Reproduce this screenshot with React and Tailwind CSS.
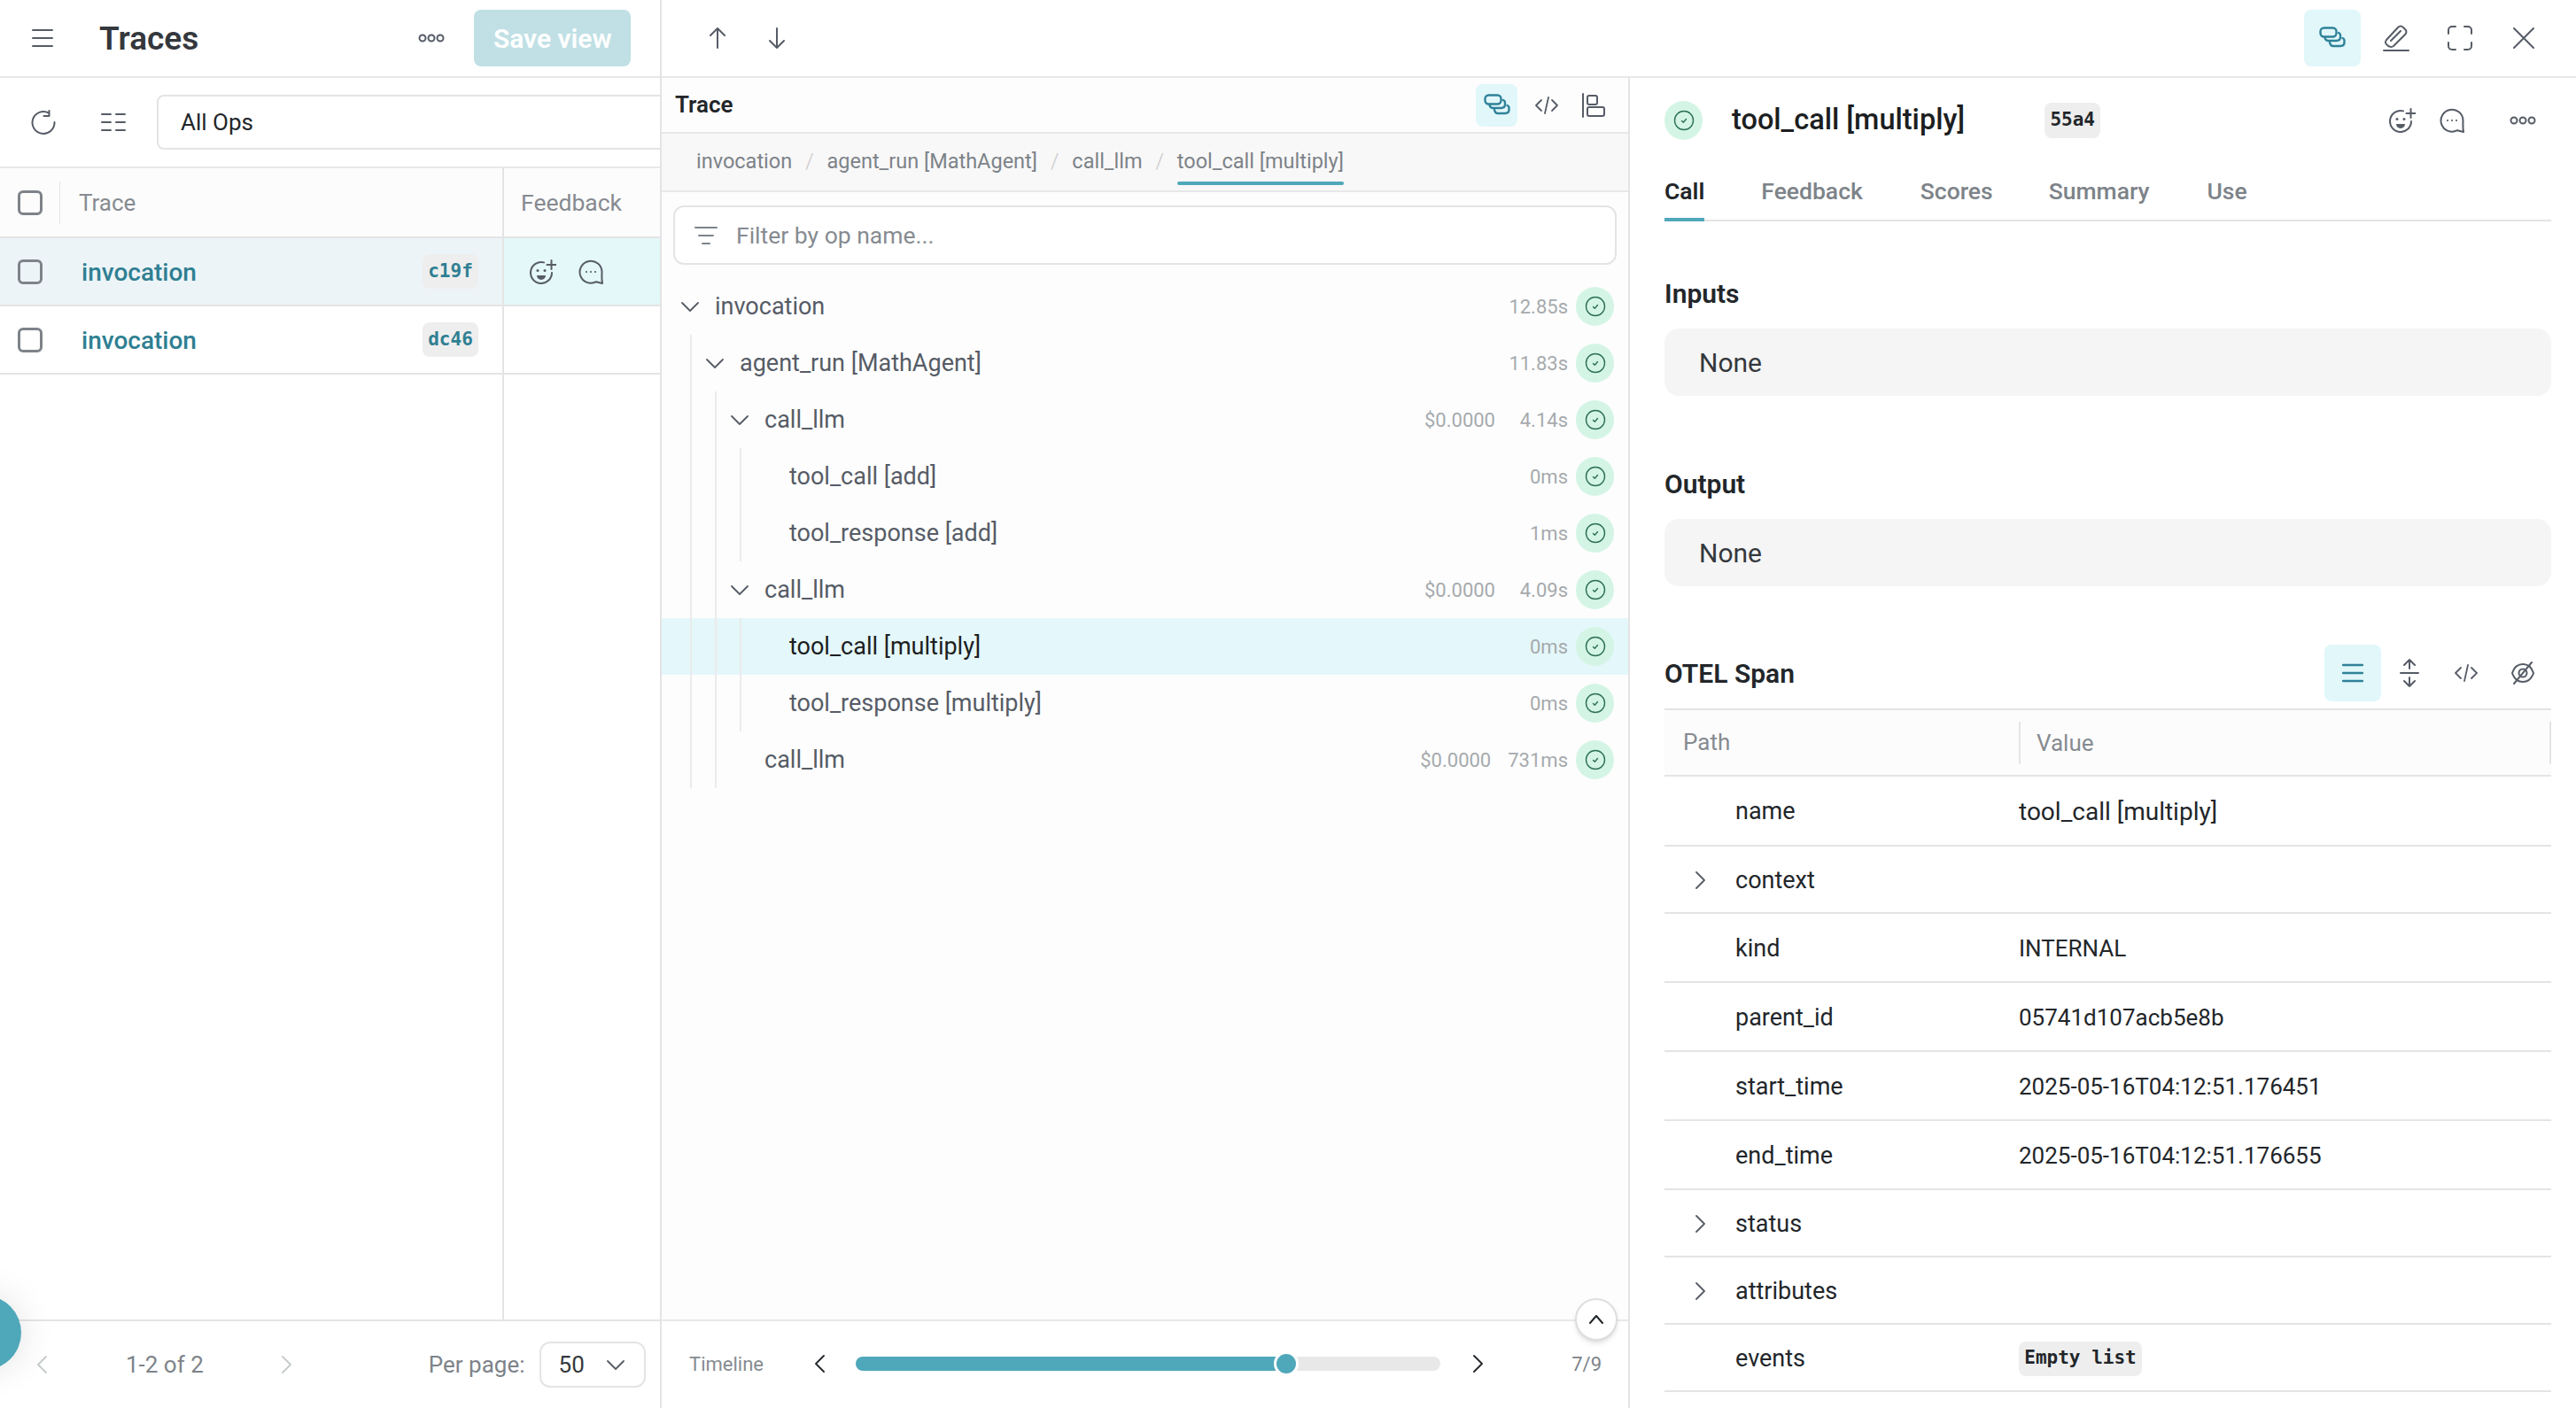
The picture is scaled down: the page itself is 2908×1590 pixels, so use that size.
import React from 'react';

const Ico = ({ w, h = w, sw = 2, className = '', children }) => (
  <svg
    width={w}
    height={h}
    viewBox={`0 0 ${w} ${h}`}
    fill="none"
    stroke="currentColor"
    strokeWidth={sw}
    strokeLinecap="round"
    strokeLinejoin="round"
    className={`shrink-0 ${className}`}
  >
    {children}
  </svg>
);

const ChevronDown = ({ className }) => (
  <Ico w={20} h={11} sw={1.800} className={className}><path d="M1 1l9 9 9-9" /></Ico>
);
const ChevronRight = ({ className }) => (
  <Ico w={11} h={20} sw={1.800} className={className}><path d="M1 1l9 9-9 9" /></Ico>
);
const ChevronLeft = ({ className }) => (
  <Ico w={11} h={20} sw={1.800} className={className}><path d="M10 1L1 10l9 9" /></Ico>
);

const Layers = () => (
  <Ico w={30} h={26} sw={2.400} className="text-[#2f8299]">
    <rect x="1.500" y="1.500" width="18" height="10" rx="4" />
    <path d="M6.500 12.500c.5 2.500 1.800 3.500 4 3.500h9c3 0 4.500-1.500 4.500-4v-2c0-1.500-.7-2.500-2-3" />
    <path d="M12 18c.5 3 1.800 4 4 4h8c3 0 4.500-1.500 4.500-4v-2c0-1.500-.7-2.500-2-3" />
  </Ico>
);
const Code = () => (
  <Ico w={28} h={22} sw={1.800} className="text-[#565c66]">
    <path d="M8 5l-6 6 6 6M20 5l6 6-6 6M16 2l-4 18" />
  </Ico>
);
const Dots = ({ className = '' }) => (
  <Ico w={30} h={10} className={`text-[#565c66] ${className}`}>
    <circle cx="5" cy="5" r="3.500" />
    <circle cx="15" cy="5" r="3.500" />
    <circle cx="25" cy="5" r="3.500" />
  </Ico>
);
const Reaction = () => (
  <Ico w={30} h={28} className="text-[#565c66]">
    <path d="M16 3.400A12 12 0 1 0 25 15" />
    <path d="M24.500 1v10M19.500 6h10" />
    <circle cx="9" cy="12.500" r="1.500" fill="currentColor" stroke="none" />
    <circle cx="17" cy="12.500" r="1.500" fill="currentColor" stroke="none" />
    <path d="M8 18h10a5 5 0 0 1-10 0z" fill="currentColor" stroke="none" />
  </Ico>
);
const Comment = () => (
  <Ico w={28} h={28} className="text-[#565c66]">
    <path d="M27 27l-7-1.800A12.500 12.500 0 1 1 26.500 14c0 4.500-.5 8 .5 13z" />
    <circle cx="9" cy="14" r="1.100" fill="currentColor" stroke="none" />
    <circle cx="14" cy="14" r="1.100" fill="currentColor" stroke="none" />
    <circle cx="19" cy="14" r="1.100" fill="currentColor" stroke="none" />
  </Ico>
);
const Status = () => (
  <div className="flex h-[44px] w-[43px] shrink-0 items-center justify-center rounded-full bg-[#d4f5e6] text-[#2e6f58]">
    <Ico w={24} sw={1.400}>
      <circle cx="12" cy="12" r="10.500" />
      <path d="M9.500 12.500l1.800 1.800 3.200-3.800" />
    </Ico>
  </div>
);

const tree = [
  { name: 'invocation', depth: 0, guides: 0, open: true, time: '12.85s' },
  { name: 'agent_run [MathAgent]', depth: 1, guides: 1, open: true, time: '11.83s' },
  { name: 'call_llm', depth: 2, guides: 2, open: true, cost: '$0.0000', time: '4.14s' },
  { name: 'tool_call [add]', depth: 3, guides: 3, time: '0ms' },
  { name: 'tool_response [add]', depth: 3, guides: 3, time: '1ms' },
  { name: 'call_llm', depth: 2, guides: 2, open: true, cost: '$0.0000', time: '4.09s' },
  { name: 'tool_call [multiply]', depth: 3, guides: 3, time: '0ms', active: true },
  { name: 'tool_response [multiply]', depth: 3, guides: 3, time: '0ms' },
  { name: 'call_llm', depth: 2, guides: 2, cost: '$0.0000', time: '731ms' },
];

const spanRows = [
  { path: 'name', value: 'tool_call [multiply]', valueClass: 'text-[28px]', h: 'h-[79px]' },
  { path: 'context', more: true, h: 'h-[76px]' },
  { path: 'kind', value: 'INTERNAL', h: 'h-[78px]' },
  { path: 'parent_id', value: '05741d107acb5e8b', h: 'h-[78px]' },
  { path: 'start_time', value: '2025-05-16T04:12:51.176451', h: 'h-[78px]' },
  { path: 'end_time', value: '2025-05-16T04:12:51.176655', h: 'h-[78px]' },
  { path: 'status', more: true, h: 'h-[76px]' },
  { path: 'attributes', more: true, h: 'h-[76px]' },
  { path: 'events', pill: 'Empty list', h: 'h-[76px]' },
];

const monoPill = "[font-family:'DejaVu_Sans_Mono',monospace] text-[21px] font-bold";

const LeftPanel = () => (
  <div className="flex w-[747px] shrink-0 flex-col border-r-2 border-[#e4e4e4]">
    <div className="flex h-[88px] shrink-0 items-center border-b-2 border-[#e8e8e8]">
      <Ico w={24} h={22} className="ml-[36px] text-[#565c66]">
        <path d="M1 2h22M1 11h22M1 20h22" />
      </Ico>
      <div className="ml-[52px] pt-[2px] text-[37px] font-semibold text-[#34383d]">Traces</div>
      <Dots className="ml-[248px]" />
      <div className="ml-[33px] flex h-[64px] w-[177px] items-center justify-center rounded-lg bg-[#c0e0e5] text-[30px] font-semibold text-white">
        Save view
      </div>
    </div>

    <div className="flex h-[102px] shrink-0 items-center overflow-hidden border-b-2 border-[#e8e8e8]">
      <Ico w={28} sw={2} className="ml-[35px] text-[#565c66]">
        <path d="M20 3.500A12.500 12.500 0 1 0 26.500 14" />
        <path d="M20.500 1v6h-6" />
      </Ico>
      <Ico w={28} h={22} className="ml-[51px] text-[#565c66]">
        <path d="M1 2h10M17 2h10M1 11h10M17 11h10M1 20h10M17 20h10" />
      </Ico>
      <div className="ml-[35px] flex h-[62px] w-[640px] shrink-0 items-center rounded-lg border-2 border-[#e4e4e4] pl-[25px] pt-[1px] text-[26px] text-[#22262a]">
        All Ops
      </div>
    </div>

    <div className="flex flex-1">
      <div className="flex w-[567px] shrink-0 flex-col">
        <div className="flex h-[79px] items-center border-b-2 border-[#e4e4e4] bg-[#fcfcfc]">
          <div className="ml-[20px] h-[28px] w-[28px] rounded-md border-[3px] border-[#7d8389]" />
          <div className="ml-[19px] h-[48px] border-l border-[#e4e4e4]" />
          <div className="ml-[21px] pt-[2px] text-[26px] text-[#868b91]">Trace</div>
        </div>
        {[
          { id: 'c19f', bg: 'bg-[#edf4f7]' },
          { id: 'dc46', bg: 'bg-white' },
        ].map((row) => (
          <div key={row.id} className={`flex h-[77px] items-center border-b-2 border-[#e4e4e4] ${row.bg}`}>
            <div className="ml-[20px] h-[28px] w-[28px] rounded-md border-[3px] border-[#7d8389]" />
            <div className="ml-[44px] pt-[3px] text-[28px] font-medium text-[#2f7f92]">invocation</div>
            <div className={`ml-auto mr-[27px] flex h-[39px] w-[63px] items-center justify-center rounded-lg bg-[#eeeeee] text-[#2f7f92] ${monoPill}`}>
              {row.id}
            </div>
          </div>
        ))}
      </div>
      <div className="flex flex-1 flex-col border-l-2 border-[#e4e4e4]">
        <div className="flex h-[79px] items-center border-b-2 border-[#e4e4e4] bg-[#fcfcfc] pl-[19px] text-[26.500px] text-[#868b91]">
          Feedback
        </div>
        <div className="flex h-[77px] items-center gap-[25px] border-b-2 border-[#e4e4e4] bg-[#e4f7f9] pl-[29px]">
          <Reaction />
          <Comment />
        </div>
        <div className="h-[77px] border-b-2 border-[#e4e4e4]" />
      </div>
    </div>

    <div className="flex h-[100px] shrink-0 items-center border-t-2 border-[#e4e4e4] text-[26px] text-[#7d8389]">
      <ChevronLeft className="ml-[42px] text-[#c6cacc]" />
      <div className="ml-[89px]">1-2 of 2</div>
      <ChevronRight className="ml-[88px] text-[#c6cacc]" />
      <div className="ml-[155px]">Per page:</div>
      <div className="ml-[16px] flex h-[52px] w-[120px] items-center rounded-xl border-2 border-[#e4e4e4] pl-[20px] text-[#34383d]">
        50
        <ChevronDown className="ml-[25px] text-[#565c66]" />
      </div>
    </div>
  </div>
);

const TreeRow = ({ row }) => (
  <div className={`flex h-[64px] items-stretch pl-[32px] pr-[16px] ${row.active ? 'bg-[#e4f7fa]' : ''}`}>
    {tree.slice(0, row.guides).map((_, i) => (
      <div key={i} className="w-[28px] shrink-0 border-l-2 border-[#ebebeb]" />
    ))}
    <div className="-ml-[12px] mr-[16px] flex w-[24px] shrink-0 items-center justify-center text-[#565c66]">
      {row.open && <ChevronDown />}
    </div>
    <div className={`self-center text-[27px] ${row.active ? 'text-[#1c1e21]' : 'text-[#565c66]'}`}>{row.name}</div>
    <div className="ml-auto self-center text-[22px] text-[#a6aaad]">{row.cost}</div>
    <div className="ml-[19px] min-w-[63px] self-center text-right text-[22px] text-[#a6aaad]">{row.time}</div>
    <div className="ml-[9px] self-center"><Status /></div>
  </div>
);

const MiddlePanel = () => (
  <div className="relative flex w-[1093px] shrink-0 flex-col border-r-2 border-[#e4e4e4] bg-[#fdfdfd]">
    <div className="flex h-[63px] shrink-0 items-center border-b-2 border-[#e8e8e8] pl-[15px] pr-[26px]">
      <div className="text-[26px] font-semibold text-[#22262a]">Trace</div>
      <div className="ml-auto flex h-[48px] w-[47px] items-center justify-center rounded-lg bg-[#e1f7fa]"><Layers /></div>
      <div className="ml-[9px] flex w-[47px] justify-center"><Code /></div>
      <Ico w={26} h={28} className="ml-[17px] text-[#565c66]">
        <path d="M1 1v26" />
        <rect x="6" y="3" width="11" height="10" rx="2" />
        <rect x="6" y="16" width="19" height="10" rx="2" />
      </Ico>
    </div>

    <div className="flex h-[66px] shrink-0 border-b-2 border-[#e8e8e8] bg-[#f8f8f8] pl-[39px] text-[23.500px] text-[#7d8389]">
      <div className="flex h-[64px] items-center">invocation</div>
      <div className="mx-[15px] flex h-[64px] items-center font-light text-[#c8c8c8]">/</div>
      <div className="flex h-[64px] items-center">agent_run [MathAgent]</div>
      <div className="mx-[15px] flex h-[64px] items-center font-light text-[#c8c8c8]">/</div>
      <div className="flex h-[64px] items-center">call_llm</div>
      <div className="mx-[15px] flex h-[64px] items-center font-light text-[#c8c8c8]">/</div>
      <div className="relative flex h-[64px] items-center">
        tool_call [multiply]
        <div className="absolute bottom-[6px] left-0 h-[4px] w-full rounded-full bg-[#4fa8ba]" />
      </div>
    </div>

    <div className="mx-[13px] mt-[15px] flex h-[67px] shrink-0 items-center rounded-xl border-2 border-[#e4e4e4] bg-white pl-[22px] text-[26.500px] text-[#868b91]">
      <Ico w={26} h={22} className="text-[#7d8389]">
        <path d="M1 2h24M5 11h16M9 20h8" />
      </Ico>
      <div className="ml-[21px]">Filter by op name...</div>
    </div>

    <div className="mt-[15px] flex-1">
      {tree.map((row, i) => (
        <TreeRow key={i} row={row} />
      ))}
    </div>

    <div className="flex h-[100px] shrink-0 items-center border-t-2 border-[#e8e8e8] bg-white pb-[2px] text-[22px] text-[#868b91]">
      <div className="ml-[31px] w-[142px]">Timeline</div>
      <ChevronLeft className="text-[#22262a]" />
      <div className="ml-[35px] flex h-[16px] w-[660px] items-center rounded-full bg-[#e8e8e8]">
        <div className="h-[16px] w-[474px] rounded-l-full bg-[#4fa8ba]" />
        <div className="-ml-[2px] h-[28px] w-[28px] rounded-full border-[3px] border-white bg-[#4fa8ba]" />
      </div>
      <ChevronRight className="ml-[37px] text-[#22262a]" />
      <div className="ml-auto mr-[30px] text-[#7d8389]">7/9</div>
    </div>

    <div className="absolute bottom-[76px] right-[12px] flex h-[48px] w-[48px] items-center justify-center rounded-full border-2 border-[#dedede] bg-white text-[#22262a] shadow-md">
      <Ico w={16} h={10}><path d="M1 9l7-8 7 8" /></Ico>
    </div>
  </div>
);

const DetailPanel = () => (
  <div className="min-w-0 flex-1 pl-[39px] pr-[28px] text-[#22262a]">
    <div className="flex h-[70px] items-end">
      <Status />
      <div className="ml-[33px] self-center pt-[25px] text-[32.500px] font-medium text-[#1c1e21]">tool_call [multiply]</div>
      <div className={`ml-[90px] mb-[2px] flex h-[40px] w-[63px] items-center justify-center rounded-lg bg-[#eeeeee] text-[#22262a] ${monoPill}`}>55a4</div>
      <div className="ml-auto flex items-center pb-[8px] pr-[17px]">
        <Reaction />
        <div className="ml-[27px]"><Comment /></div>
        <Dots className="ml-[51px]" />
      </div>
    </div>

    <div className="mt-[32px] flex h-[60px] border-b-2 border-[#e4e4e4] text-[26.500px] font-medium text-[#7d8389]">
      <div className="h-[60px] border-b-[4px] border-[#4fa8ba] pt-[6px] font-semibold text-[#22262a]">Call</div>
      <div className="ml-[64px] pt-[6px]">Feedback</div>
      <div className="ml-[65px] pt-[6px]">Scores</div>
      <div className="ml-[63px] pt-[6px]">Summary</div>
      <div className="ml-[65px] pt-[6px]">Use</div>
    </div>

    <div className="mt-[64px] text-[30px] font-semibold leading-[36px]">Inputs</div>
    <div className="mt-[21px] flex h-[76px] items-center rounded-2xl bg-[#f5f5f5] pl-[39px] text-[30px] text-[#34383d]">None</div>
    <div className="mt-[82px] text-[30px] font-semibold leading-[36px]">Output</div>
    <div className="mt-[21px] flex h-[76px] items-center rounded-2xl bg-[#f5f5f5] pl-[39px] text-[30px] text-[#34383d]">None</div>

    <div className="mt-[66px] flex h-[64px] items-center">
      <div className="text-[30px] font-semibold">OTEL Span</div>
      <div className="ml-auto flex items-center">
        <div className="flex h-[64px] w-[64px] items-center justify-center rounded-lg bg-[#e1f7fa] text-[#2f8299]">
          <Ico w={24} h={24} sw={2.400}><path d="M1 3h22M1 12h22M1 21h22" /></Ico>
        </div>
        <div className="flex w-[64px] justify-center text-[#565c66]">
          <Ico w={22} h={34}>
            <path d="M1 17h20M11 2v10M5 8l6-6 6 6M11 22v10M5 26l6 6 6-6" />
          </Ico>
        </div>
        <div className="flex w-[64px] justify-center"><Code /></div>
        <div className="flex w-[64px] justify-center text-[#565c66]">
          <Ico w={30} h={28}>
            <path d="M3 14c2-6 6-10 12-10s10 4 12 10c-2 6-6 10-12 10S5 20 3 14z" />
            <circle cx="15" cy="14" r="4.500" />
            <path d="M25 2L5 26" />
          </Ico>
        </div>
      </div>
    </div>

    <div className="mt-[8px] flex h-[77px] items-center border-y-2 border-[#e4e4e4] bg-[#fcfcfc] text-[26px] text-[#868b91]">
      <div className="w-[400px] pl-[21px]">Path</div>
      <div className="h-[48px] border-l-2 border-[#e4e4e4] pl-[18px] leading-[48px]">Value</div>
      <div className="ml-auto h-[48px] border-l-2 border-[#e4e4e4]" />
    </div>

    {spanRows.map((row) => (
      <div key={row.path} className={`flex items-center border-b-2 border-[#e4e4e4] pt-[2px] text-[26px] ${row.h}`}>
        <div className="flex w-[46px] shrink-0 justify-end text-[#565c66]">{row.more && <ChevronRight />}</div>
        <div className="ml-[34px] w-[320px] shrink-0 text-[27px]">{row.path}</div>
        {row.value && <div className={row.valueClass}>{row.value}</div>}
        {row.pill && (
          <div className={`flex h-[39px] w-[139px] items-center justify-center rounded-lg bg-[#eeeeee] ${monoPill}`}>{row.pill}</div>
        )}
      </div>
    ))}
  </div>
);

export default function App() {
  return (
    <div className="relative flex h-[1590px] w-[2908px] overflow-hidden bg-white [font-family:Roboto,sans-serif]">
      <LeftPanel />
      <div className="flex min-w-0 flex-1 flex-col">
        <div className="flex h-[88px] shrink-0 items-center border-b-2 border-[#e8e8e8] text-[#565c66]">
          <Ico w={20} h={24} className="ml-[53px]"><path d="M10 23V1M2 9l8-8 8 8" /></Ico>
          <Ico w={20} h={24} className="ml-[47px]"><path d="M10 1v22M2 15l8 8 8-8" /></Ico>
          <div className="ml-auto flex h-[64px] w-[64px] items-center justify-center rounded-lg bg-[#e1f7fa]"><Layers /></div>
          <Ico w={32} h={32} className="ml-[24px]">
            <path d="M2 30h28M6 24c-2.500-1.500-2.500-4-1-6L18 4c2-2 4-2 6 0l2 2c2 2 2 4 0 6L13 25c-2 1.500-5 1-7-1zM10 19L21 8" />
          </Ico>
          <Ico w={28} h={28} className="ml-[42px]">
            <path d="M9 1H5a4 4 0 0 0-4 4v4M19 1h4a4 4 0 0 1 4 4v4M9 27H5a4 4 0 0 1-4-4v-4M19 27h4a4 4 0 0 0 4-4v-4" />
          </Ico>
          <Ico w={24} h={24} className="ml-[46px] mr-[47px]"><path d="M1 1l22 22M23 1L1 23" /></Ico>
        </div>
        <div className="flex min-h-0 flex-1">
          <MiddlePanel />
          <DetailPanel />
        </div>
      </div>
      <div className="absolute left-[-60px] top-[1463px] h-[84px] w-[84px] rounded-full bg-[#4fa8ba] shadow-[0_0_40px_rgba(0,0,0,0.12)]" />
    </div>
  );
}
